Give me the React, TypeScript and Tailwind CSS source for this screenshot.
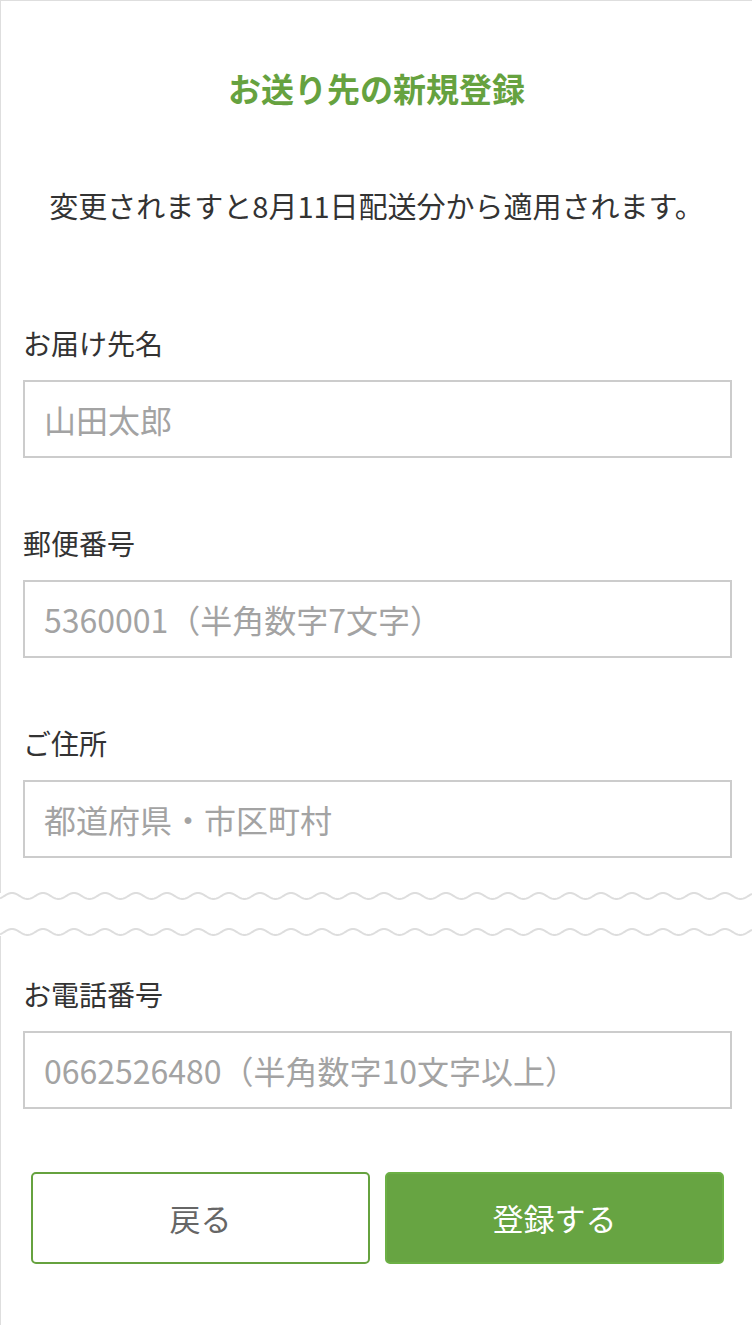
const font = { fontFamily: '"Noto Sans CJK JP", "Noto Sans", sans-serif' };

const fields = [
  { label: 'お届け先名', placeholder: '山田太郎' },
  { label: '郵便番号', placeholder: '5360001（半角数字7文字）' },
  { label: 'ご住所', placeholder: '都道府県・市区町村' },
];

function Wave() {
  // torn-page style wavy line
  const pts: string[] = [];
  for (let x = 0; x <= 752; x += 1) {
    const y = 6 - 3 * Math.cos((2 * Math.PI * (x - 12)) / 31);
    pts.push(`${x},${y.toFixed(2)}`);
  }
  return (
    <svg width="752" height="12" viewBox="0 0 752 12" className="block">
      <polyline points={pts.join(' ')} fill="none" stroke="#dddddd" strokeWidth="2" />
    </svg>
  );
}

function Field({ label, placeholder }: { label: string; placeholder: string }) {
  return (
    <div>
      <div className="text-[28px] leading-[40px] text-[#333]">{label}</div>
      <input
        type="text"
        placeholder={placeholder}
        style={font}
        className="mt-[17px] block w-full h-[78px] border-2 border-[#cccccc] bg-white pl-[19px] text-[32px] text-[#333] placeholder:text-[#a3a3a3] outline-none"
      />
    </div>
  );
}

export default function App() {
  return (
    <div className="w-[752px] min-h-[1325px] bg-white" style={font}>
      <div className="border-t border-l border-[#dedede] pt-[65px] pb-[35px]">
        <h1 className="text-center text-[33px] leading-[44px] font-bold text-[#66a23f]">お送り先の新規登録</h1>
        <p className="mt-[75px] text-center text-[29px] leading-[40px] text-[#333]">
          変更されますと8月11日配送分から適用されます。
        </p>
        <div className="mt-[98px] pl-[22px] pr-[20px] flex flex-col gap-[65px]">
          {fields.map((f) => (
            <Field key={f.label} label={f.label} placeholder={f.placeholder} />
          ))}
        </div>
      </div>
      <div className="-mt-[3px]">
        <Wave />
      </div>
      <div className="mt-[24px]">
        <Wave />
      </div>
      <div className="-mt-[2px] border-l border-[#dedede] pt-[38px] pb-[61px]">
        <div className="pl-[22px] pr-[20px]">
          <Field label="お電話番号" placeholder="0662526480（半角数字10文字以上）" />
        </div>
        <div className="mt-[63px] pl-[30px] pr-[28px] flex gap-[15px]">
          <button className="flex-1 h-[92px] rounded-[5px] border-2 border-[#66a23f] bg-white text-[31px] text-[#666]">
            戻る
          </button>
          <button className="flex-1 h-[92px] rounded-[5px] border-2 border-[#6cb045] bg-[#67a442] text-[31px] text-white">
            登録する
          </button>
        </div>
      </div>
    </div>
  );
}
